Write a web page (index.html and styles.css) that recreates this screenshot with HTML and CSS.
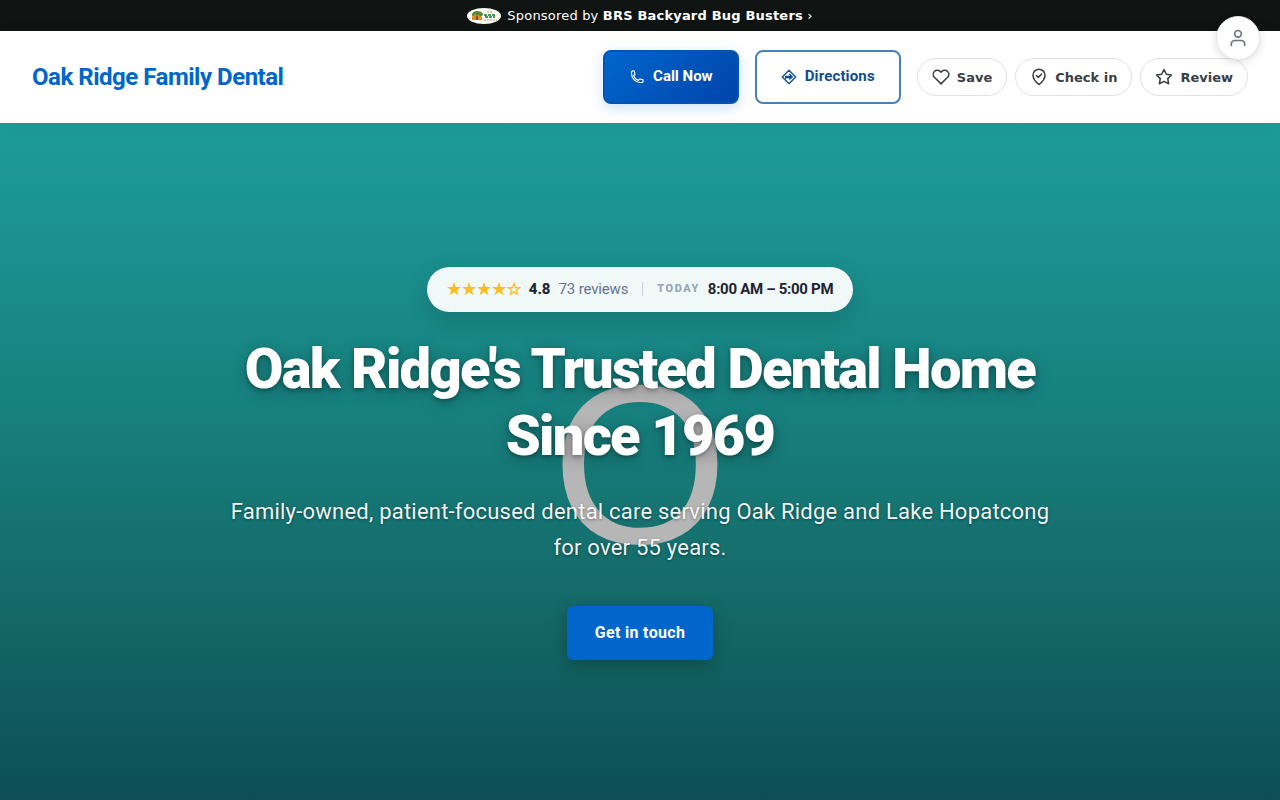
FILE: index.html
```
<!DOCTYPE html>
<html lang="en">
<head>
    <meta charset="UTF-8">
    <meta name="viewport" content="width=device-width, initial-scale=1.0">
    <title>Oak Ridge Family Dental</title>
    <link rel="stylesheet" href="styles.css">
</head>
<body>

    <!-- Sponsor bar -->
    <a class="sponsor-bar" href="#sponsor">
        <svg class="sponsor-logo" width="34" height="16" viewBox="0 0 34 16" aria-hidden="true">
            <ellipse cx="17" cy="8" rx="17" ry="8" fill="#fdfdf3"/>
            <path d="M5 7c0-3 3-4 5-4s6 1 6 3-2 2-3 3H7C6 9 5 8 5 7z" fill="#58863b"/>
            <path d="M6 8l2-2 2 2 2-1 3 2v3H5V9z" fill="#e08a2c"/>
            <path d="M9 8h2v4H9z" fill="#7a5a20"/>
            <path d="M17 7h12M18 9h10" stroke="#3f9a61" stroke-width="2" stroke-dasharray="3 1"/>
            <path d="M20 4h6M17 12h13" stroke="#d08a70" stroke-width="1" stroke-dasharray="2 1"/>
        </svg>
        <span>Sponsored by <strong>BRS Backyard Bug Busters</strong> ›</span>
    </a>

    <!-- Header -->
    <header class="site-header">
        <a class="brand" href="#home">Oak Ridge Family Dental</a>
        <div class="header-actions">
            <a class="btn btn-call" href="#call">
                <svg width="16" height="16" viewBox="-2 -1 27 27" aria-hidden="true"><path d="M2.250 6.750c0 8.284 6.716 15 15 15h2.250a2.250 2.250 0 0 0 2.250-2.250v-1.372c0-.516-.351-.966-.852-1.091l-4.423-1.106c-.44-.11-.902.055-1.173.417l-.97 1.293c-.282.376-.769.542-1.210.38a12.035 12.035 0 0 1-7.143-7.143c-.162-.441.004-.928.38-1.210l1.293-.97c.363-.271.527-.734.417-1.173L6.963 3.102a1.125 1.125 0 0 0-1.091-.852H4.500A2.250 2.250 0 0 0 2.250 4.500z"/></svg>
                <span>Call Now</span>
            </a>
            <a class="btn btn-directions" href="#directions">
                <svg width="16" height="16" viewBox="0 0 24 24" aria-hidden="true"><path d="M12 2l10 10-10 10L2 12zM7 14v-3h9M13 8l4 4-4 3M8 13h8"/></svg>
                <span>Directions</span>
            </a>
            <div class="pill-group">
                <button class="pill" type="button">
                    <svg width="18" height="18" viewBox="0 0 24 24" aria-hidden="true"><path d="M20.8 4.6a5.5 5.5 0 0 0-7.8 0L12 5.7l-1-1.1a5.5 5.5 0 0 0-7.8 7.8l1 1L12 21.2l7.8-7.8 1-1a5.5 5.5 0 0 0 0-7.8z"/></svg>
                    Save
                </button>
                <button class="pill" type="button">
                    <svg width="18" height="18" viewBox="0 0 24 24" aria-hidden="true"><path d="M12 22s8-6.500 8-12.500a8 8 0 0 0-16 0C4 15.500 12 22 12 22zM8.500 10l2.500 2.500 4.500-4.500"/></svg>
                    Check in
                </button>
                <button class="pill" type="button">
                    <svg width="18" height="18" viewBox="0 0 24 24" aria-hidden="true"><path d="M12 2l3.100 6.300 6.900 1-5 4.900 1.200 6.800-6.200-3.200L5.800 21 7 14.200 2 9.300l6.900-1z"/></svg>
                    Review
                </button>
            </div>
        </div>
    </header>

    <!-- Account button, floats over the page -->
    <button class="account" type="button" aria-label="Account">
        <svg width="20" height="20" viewBox="0 0 24 24" aria-hidden="true"><path d="M20 21v-2a4 4 0 0 0-4-4H8a4 4 0 0 0-4 4v2"/><circle cx="12" cy="7" r="4"/></svg>
    </button>

    <!-- Hero -->
    <main class="hero">
        <div class="hero-letter" aria-hidden="true">O</div>
        <div class="hero-content">
            <div class="info-pill">
                <span class="stars" role="img" aria-label="4.8 out of 5">
                    <svg width="74" height="14" viewBox="0 0 74 14" aria-hidden="true">
                        <defs>
                            <path id="star" d="M7 0l1.800 4.900 5.200 0.100-4.100 3.200 1.500 5.100L7 10.300 2.600 13.300l1.500-5.100L0 5l5.200-0.100z"/>
                        </defs>
                        <use href="#star"/>
                        <use href="#star" x="15"/>
                        <use href="#star" x="30"/>
                        <use href="#star" x="45"/>
                        <path d="M67 1.500l1.400 4 4.200 0.100-3.300 2.600 1.200 4.100L67 9.900l-3.500 2.400 1.200-4.100-3.300-2.600 4.200-0.100z" fill="none" stroke="#fbbf24" stroke-width="1.300"/>
                    </svg>
                </span>
                <strong class="score">4.8</strong>
                <a class="reviews" href="#reviews">73 reviews</a>
                <span class="divider"></span>
                <span class="today">TODAY</span>
                <strong class="hours">8:00 AM – 5:00 PM</strong>
            </div>
            <h1>Oak Ridge's Trusted Dental Home Since 1969</h1>
            <p>Family-owned, patient-focused dental care serving Oak Ridge and Lake Hopatcong for over 55 years.</p>
            <a class="btn-contact" href="#contact">Get in touch</a>
        </div>
    </main>

</body>
</html>
```

FILE: styles.css
```
* {
    box-sizing: border-box;
}
body {
    margin: 0;
    min-height: 100vh;
    display: flex;
    flex-direction: column;
    font-family: Roboto, sans-serif;
    background: #fff;
}
a {
    text-decoration: none;
}

/* Sponsor bar */
.sponsor-bar {
    display: flex;
    align-items: center;
    justify-content: center;
    gap: 6px;
    min-height: 31px;
    background: #0f1412;
    color: #fff;
    font-family: "DejaVu Sans", sans-serif;
    font-size: 13px;
    letter-spacing: 0.015em;
}

/* Header */
.site-header {
    position: relative;
    z-index: 1;
    display: flex;
    align-items: center;
    justify-content: space-between;
    padding: 19px 32px;
    background: #fff;
    box-shadow: 0 2px 16px rgba(0, 0, 0, 0.06);
}
.brand {
    color: #0066cc;
    font-size: 24px;
    font-weight: 700;
    letter-spacing: -0.02em;
}
.header-actions {
    display: flex;
    align-items: center;
    gap: 16px;
}
.btn {
    display: flex;
    align-items: center;
    gap: 8px;
    height: 54px;
    padding: 0 24px;
    border: 2px solid #4682b8;
    border-radius: 8px;
    color: #0d4d92;
    font-size: 15px;
    font-weight: 700;
}
.btn span {
    padding-bottom: 2px;
}
.btn svg,
.pill svg,
.account svg {
    fill: none;
    stroke: currentColor;
    stroke-width: 2;
    stroke-linecap: round;
    stroke-linejoin: round;
}
.btn-call {
    border-color: #0054b4;
    background: linear-gradient(135deg, #0066cc, #0044aa);
    color: #fff;
    box-shadow: 0 4px 14px rgba(0, 102, 204, 0.2);
}
.btn-directions {
    letter-spacing: 0.01em;
}
.pill-group {
    display: flex;
    gap: 8px;
}
.pill {
    display: flex;
    align-items: center;
    gap: 7px;
    height: 38px;
    padding: 0 14px;
    border: 1px solid #dfe1e4;
    border-radius: 19px;
    background: #fff;
    color: #3a3e43;
    font-family: "DejaVu Sans", sans-serif;
    font-size: 13px;
    font-weight: 700;
}
.account {
    position: absolute;
    z-index: 2;
    top: 16px;
    right: 20px;
    display: flex;
    align-items: center;
    justify-content: center;
    width: 44px;
    height: 44px;
    padding: 0;
    border: 1px solid #e5e7eb;
    border-radius: 50%;
    background: #fff;
    color: #6b7280;
    box-shadow: 0 2px 8px rgba(0, 0, 0, 0.14);
}

/* Hero */
.hero {
    position: relative;
    flex: 1;
    display: flex;
    align-items: center;
    justify-content: center;
    padding: 36px 32px 32px;
    background: linear-gradient(180deg, #1d9c9a 0%, #178280 40%, #146866 72%, #0c4e54 100%);
}
.hero-letter {
    position: absolute;
    inset: 0;
    display: flex;
    align-items: center;
    justify-content: center;
    padding-top: 5px;
    color: #b6b6b6;
    font-family: "Liberation Sans", Arial, sans-serif;
    font-size: 227px;
    line-height: 1;
}
.hero-content {
    position: relative;
    display: flex;
    flex-direction: column;
    align-items: center;
    max-width: 836px;
    color: #fff;
    text-align: center;
}
.info-pill {
    display: flex;
    align-items: center;
    gap: 8px;
    height: 45px;
    padding: 0 20px 2px;
    border-radius: 23px;
    background: rgba(255, 255, 255, 0.94);
    color: #1f2430;
    font-size: 15px;
    box-shadow: 0 8px 24px rgba(0, 0, 0, 0.15);
}
.stars {
    display: flex;
    fill: #fbbf24;
}
.score {
    font-weight: 800;
}
.reviews {
    color: #64748b;
    letter-spacing: -0.01em;
}
.divider {
    width: 1px;
    height: 14px;
    margin: 0 6px;
    background: #cbd5e1;
}
.today {
    color: #94a3b8;
    font-size: 11px;
    font-weight: 800;
    letter-spacing: 0.14em;
}
.hours {
    letter-spacing: -0.02em;
}
h1 {
    margin: 24px 0;
    font-size: 56px;
    font-weight: 900;
    line-height: 67px;
    letter-spacing: -0.03em;
    text-shadow: 0 2px 4px rgba(0, 0, 0, 0.3), 0 4px 16px rgba(0, 0, 0, 0.25);
}
.hero p {
    margin: 0 0 40px;
    color: rgba(255, 255, 255, 0.95);
    font-size: 22px;
    line-height: 36px;
    letter-spacing: 0.01em;
    text-shadow: 0 1px 3px rgba(0, 0, 0, 0.4);
}
.btn-contact {
    display: flex;
    align-items: center;
    height: 54px;
    padding: 0 28px 2px;
    border-radius: 6px;
    background: #0066cc;
    color: #fff;
    font-size: 16px;
    font-weight: 700;
    letter-spacing: 0.02em;
    box-shadow: 0 4px 16px rgba(0, 0, 0, 0.25);
}
```
